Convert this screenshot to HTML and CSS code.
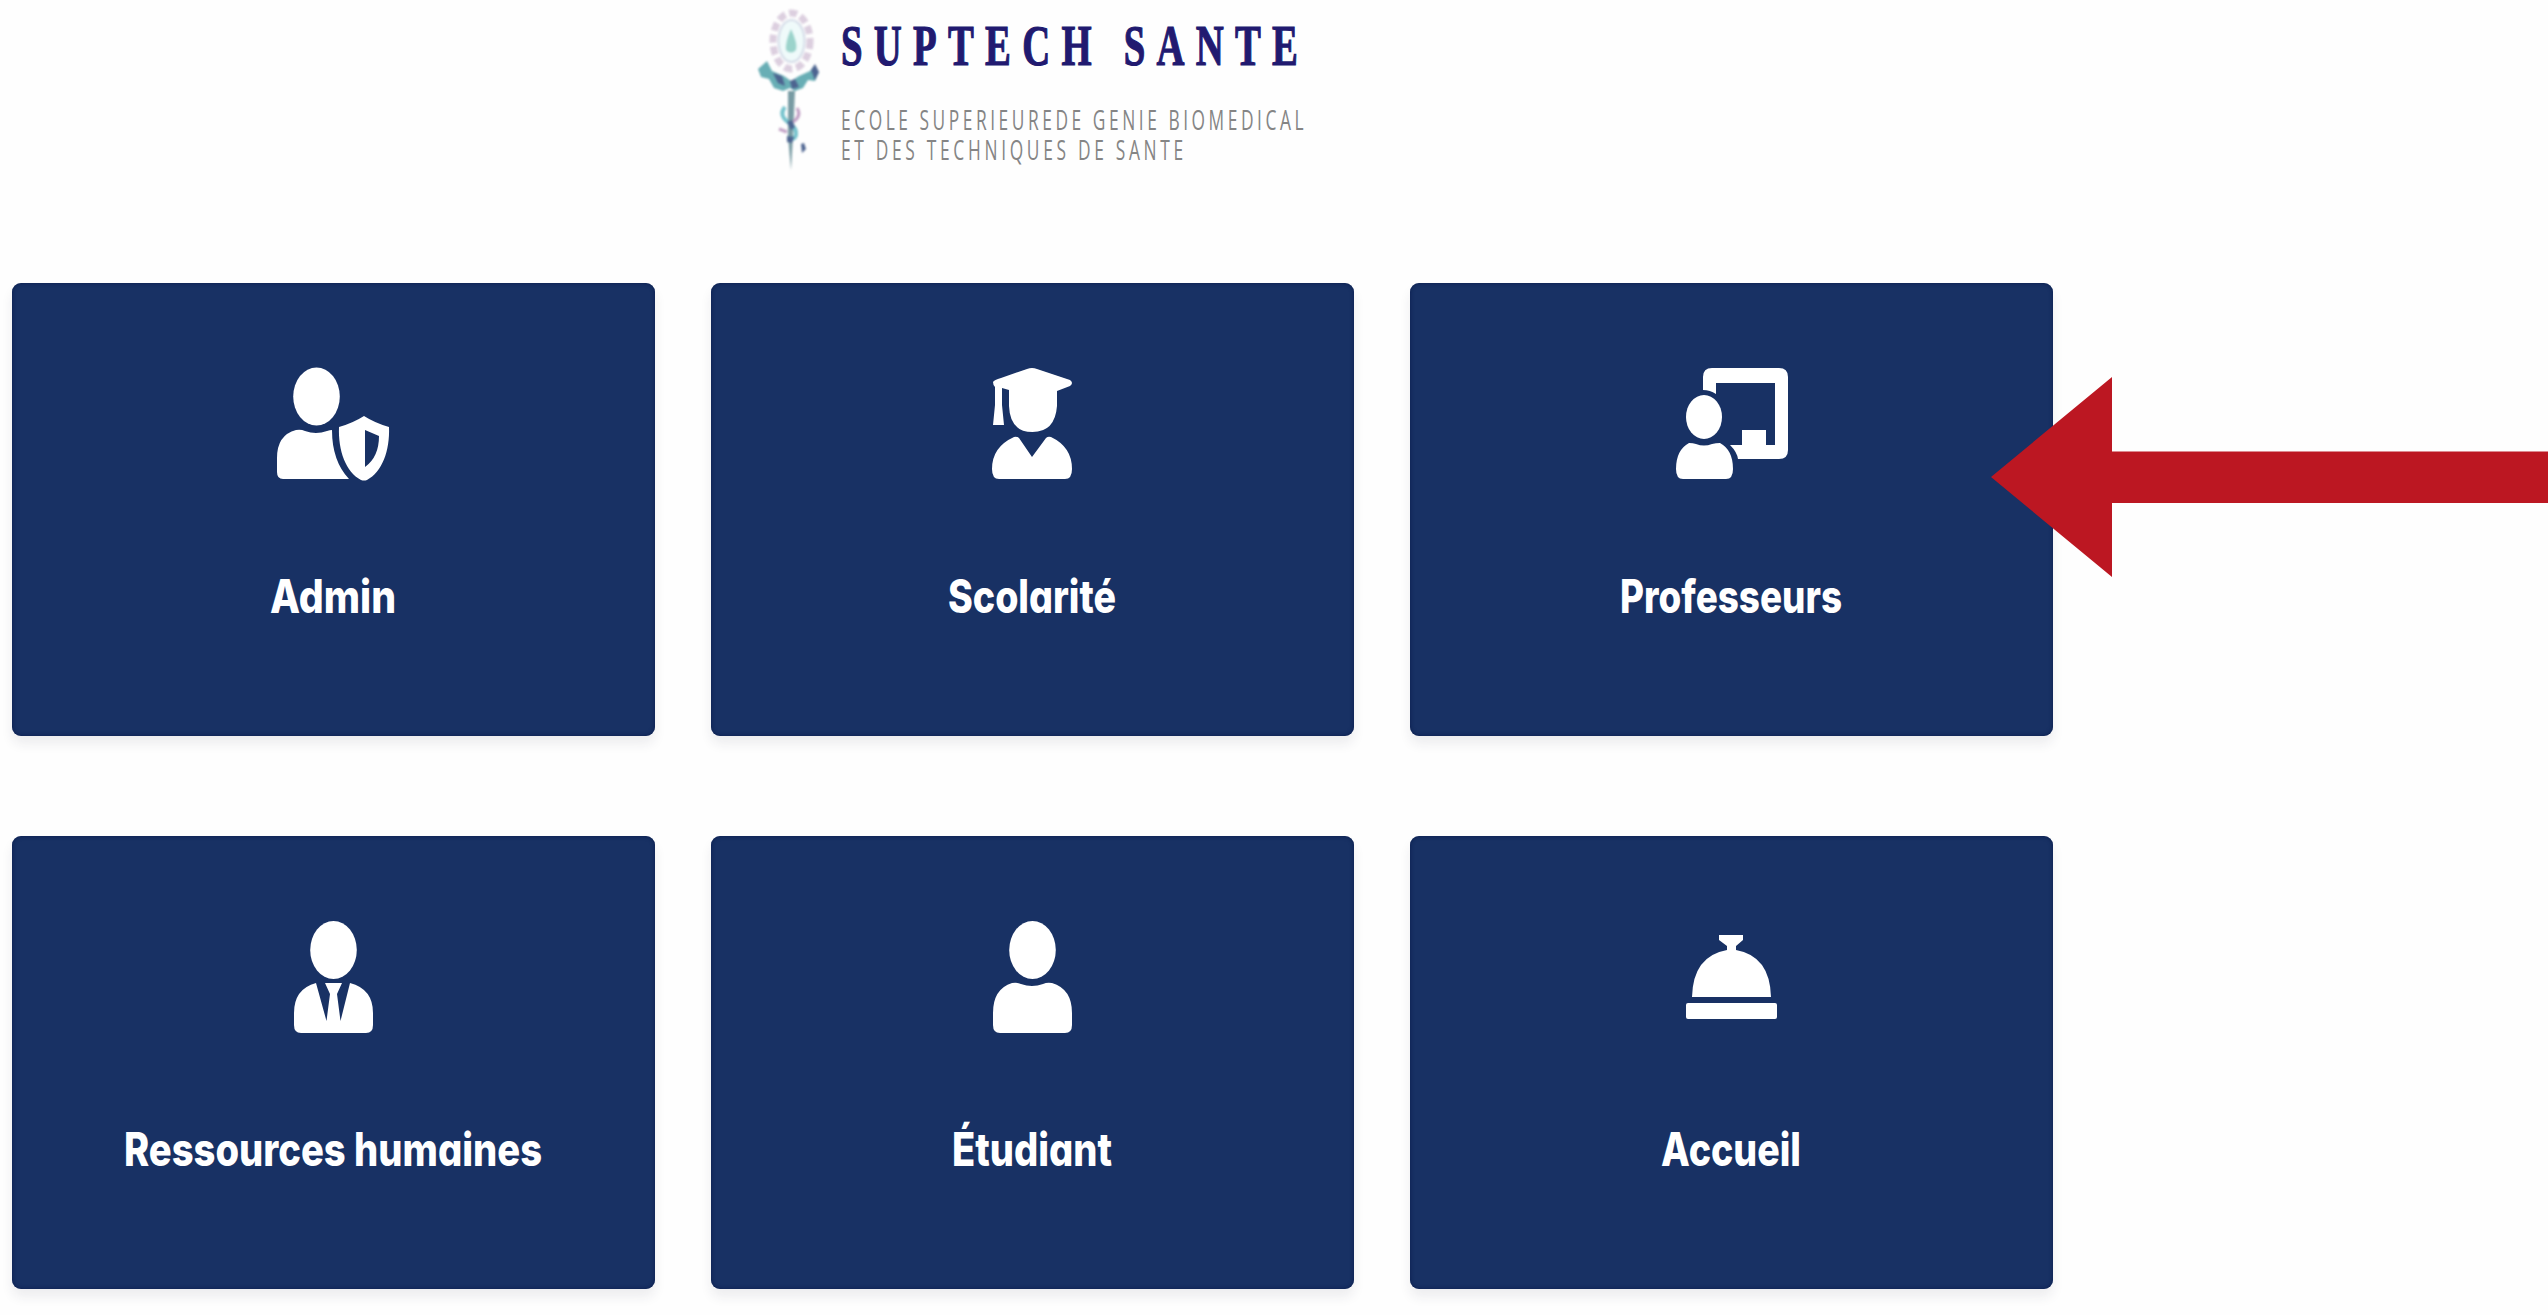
FILE: index.html
```html
<!DOCTYPE html>
<html lang="fr">
<head>
<meta charset="utf-8">
<title>Suptech Santé</title>
<link rel="stylesheet" href="styles.css">
</head>
<body>
<div class="portal">
  <header class="brand">
    <svg class="logo" viewBox="758 0 548 180" role="img" aria-label="Suptech Santé">
      <g class="emblem">
        <ellipse class="gear-teeth" cx="791.5" cy="41" rx="18.500" ry="28"/>
        <ellipse class="gear-ring" cx="791.5" cy="41" rx="13" ry="21"/>
        <path class="gear-drop" d="M791 29q7 15 5 21q-5 5-10 0q-1-7 5-21z"/>
        <path class="staff" d="M788 91h7l-2 45-2 34-3-34z"/>
        <path class="wing" d="M767 61l5 10 12 5 7 5 8-5 11-5 4-5 5 6-4 9-7-1-5 8-8 3-5-3-7 3-9-3-5-9-8-2-3-8z"/>
        <path class="wing-dark" d="M773 73l9 3 3 10-7-3zM811 70l4-6 4 8-4 8zM790 81l5-2 4 8-7 2z"/>
        <path class="snake" d="M785 107q-7 8 4 16q8 5 7 12q-2 6-7 3"/>
        <path class="snake-pink" d="M797 108q5 8-4 14M779 129l8 3"/>
        <path class="wing-dark" d="M787 122l5-2 3 7-4 3zM787 136l7 1-2 6-5-1zM801 144l3-1 2 6-4 4z"/>
      </g>
      <text class="name" transform="translate(841 65) scale(.68 1)" textLength="672">SUPTECH SANTE</text>
      <text class="tagline" transform="translate(841 130) scale(.62 1)" textLength="746">ECOLE SUPERIEUREDE GENIE BIOMEDICAL</text>
      <text class="tagline" transform="translate(841 160) scale(.62 1)" textLength="552">ET DES TECHNIQUES DE SANTE</text>
    </svg>
  </header>
  <main class="grid">
    <a class="card">
      <svg class="icon" viewBox="0 0 120 120">
        <ellipse cx="43.5" cy="31.5" rx="23.3" ry="29"/>
        <path d="M23 65q5-1 9 1 11 4 22 0 3-1 5-1 0 31 17 49H10q-6 0-6-7V93q0-23 19-28z"/>
        <path fill-rule="evenodd" d="M91 51q11 7 25 11c1 24-7 45-22 53q-3 1-6 0C73 107 65 86 66 62q14-4 25-11zm1 14v37q14-10 14-31z"/>
      </svg>
      <svg class="label" viewBox="0 0 440 64"><text x="157" y="46" textLength="126" lengthAdjust="spacingAndGlyphs">Admin</text></svg>
    </a>
    <a class="card">
      <svg class="icon" viewBox="0 0 120 120">
        <path d="M21 17q1-2 8-4l26-9q5-2 10 0l33 11q4 3 0 6l-13 5v15q-2 26-24.500 26T37 41V25l-7-2v17l2 20H21l2-20V22q-2-2-2-5z"/>
        <path d="M42 72q3-1 5 1l13 19 14-19q2-2 5-1 21 10 21 32 0 10-7 10H27q-7 0-7-10 0-22 22-32z"/>
      </svg>
      <svg class="label" viewBox="0 0 440 64"><text x="136" y="46" textLength="168" lengthAdjust="spacingAndGlyphs">Scolarité</text></svg>
    </a>
    <a class="card">
      <svg class="icon" viewBox="0 0 120 120">
        <path d="M32 25V12q0-9 9-9h67q9 0 9 9v73q0 9-9 9H67q-1-7-8-14h12V65h24v15h9V18H45v11q-6-4-13-4z"/>
        <ellipse cx="33" cy="52" rx="18" ry="22"/>
        <path d="M18 78q4 0 7 1 8 3 16 0 4-1 8-1 13 7 13 26 0 10-7 10H12q-7 0-7-10 0-19 13-26z"/>
      </svg>
      <svg class="label" viewBox="0 0 440 64"><text x="109" y="46" textLength="222" lengthAdjust="spacingAndGlyphs">Professeurs</text></svg>
    </a>
    <a class="card">
      <svg class="icon" viewBox="0 0 120 120">
        <ellipse cx="60.500" cy="32" rx="23.300" ry="29"/>
        <path d="M43 65l10.500 38L57 76l-5-11h17l-5 11 3.500 27L77 65q23 6 23 30v12q0 8-7 8H28q-7 0-7-8V95q0-24 22-30z"/>
      </svg>
      <svg class="label" viewBox="0 0 440 64"><text x="11" y="46" textLength="418" lengthAdjust="spacingAndGlyphs">Ressources humaines</text></svg>
    </a>
    <a class="card">
      <svg class="icon" viewBox="0 0 120 120">
        <ellipse cx="60.500" cy="32" rx="23.300" ry="29"/>
        <path d="M40 65q5-1 9 1 11 4 22 0 4-2 9-1 20 6 20 30v12q0 8-7 8H28q-7 0-7-8V95q0-24 19-30z"/>
      </svg>
      <svg class="label" viewBox="0 0 440 64"><text x="140" y="46" textLength="160" lengthAdjust="spacingAndGlyphs">Étudiant</text></svg>
    </a>
    <a class="card">
      <svg class="icon" viewBox="0 0 120 120">
        <path d="M48 17h24v5l-7 6v4q34 6 35 47H21q1-41 35-47v-4l-8-6z"/>
        <rect x="15" y="85" width="91" height="16" rx="2"/>
      </svg>
      <svg class="label" viewBox="0 0 440 64"><text x="150" y="46" textLength="140" lengthAdjust="spacingAndGlyphs">Accueil</text></svg>
    </a>
  </main>
  <svg class="pointer" viewBox="0 0 557 200"><path d="M0 100L121 0V74.500H557V126H121V200z"/></svg>
</div>
</body>
</html>
```
FILE: styles.css
```css
body {
  margin: 0;
  background: #fefefe;
  font-family: Inter, "Open Sans", sans-serif;
}

.portal {
  position: relative;
  width: 2548px;
  height: 1315px;
  overflow: hidden;
}

.brand {
  display: flex;
  justify-content: center;
  width: 2064px;
  height: 283px;
}

.logo {
  width: 548px;
  height: 180px;
  overflow: visible;
}

.emblem { filter: blur(1.2px); }

.name {
  font: 700 57px "Liberation Serif", serif;
  fill: #211a70;
  stroke: #211a70;
  stroke-width: 1.2px;
}

.tagline {
  font: 400 28px "Open Sans", sans-serif;
  fill: #858585;
}

.gear-teeth {
  fill: none;
  stroke: #dccfdf;
  stroke-width: 7;
  stroke-dasharray: 8 4;
}

.gear-ring {
  fill: #effafa;
  stroke: #d5dce8;
  stroke-width: 2;
}

.gear-drop { fill: #9bd3cb; }
.staff { fill: #789ba3; }
.wing { fill: #68aeb5; }
.wing-dark { fill: #4d6490; }

.snake,
.snake-pink {
  fill: none;
  stroke: #76c3cd;
  stroke-width: 4;
}

.snake-pink {
  stroke: #c2a1c5;
  stroke-width: 3;
}

.grid {
  display: grid;
  grid-template-columns: repeat(3, 643.5px);
  grid-auto-rows: 453px;
  gap: 100px 55.5px;
  padding-left: 11.5px;
}

.card {
  display: flex;
  flex-direction: column;
  align-items: center;
  box-sizing: border-box;
  padding-top: 82px;
  border-radius: 9px;
  background: #183164;
  box-shadow: 0 8px 12px rgba(40, 40, 60, 0.08), inset 0 0 4px #0a1c4c;
}

.icon {
  width: 120px;
  height: 120px;
  fill: #fff;
}

.label {
  width: 440px;
  height: 64px;
  margin-top: 82px;
  overflow: visible;
  fill: #fff;
  font-size: 46px;
  font-weight: 800;
  font-feature-settings: "cv11";
}

.pointer {
  position: absolute;
  top: 377px;
  left: 1991px;
  width: 557px;
  height: 200px;
  fill: #bc1722;
}
```
